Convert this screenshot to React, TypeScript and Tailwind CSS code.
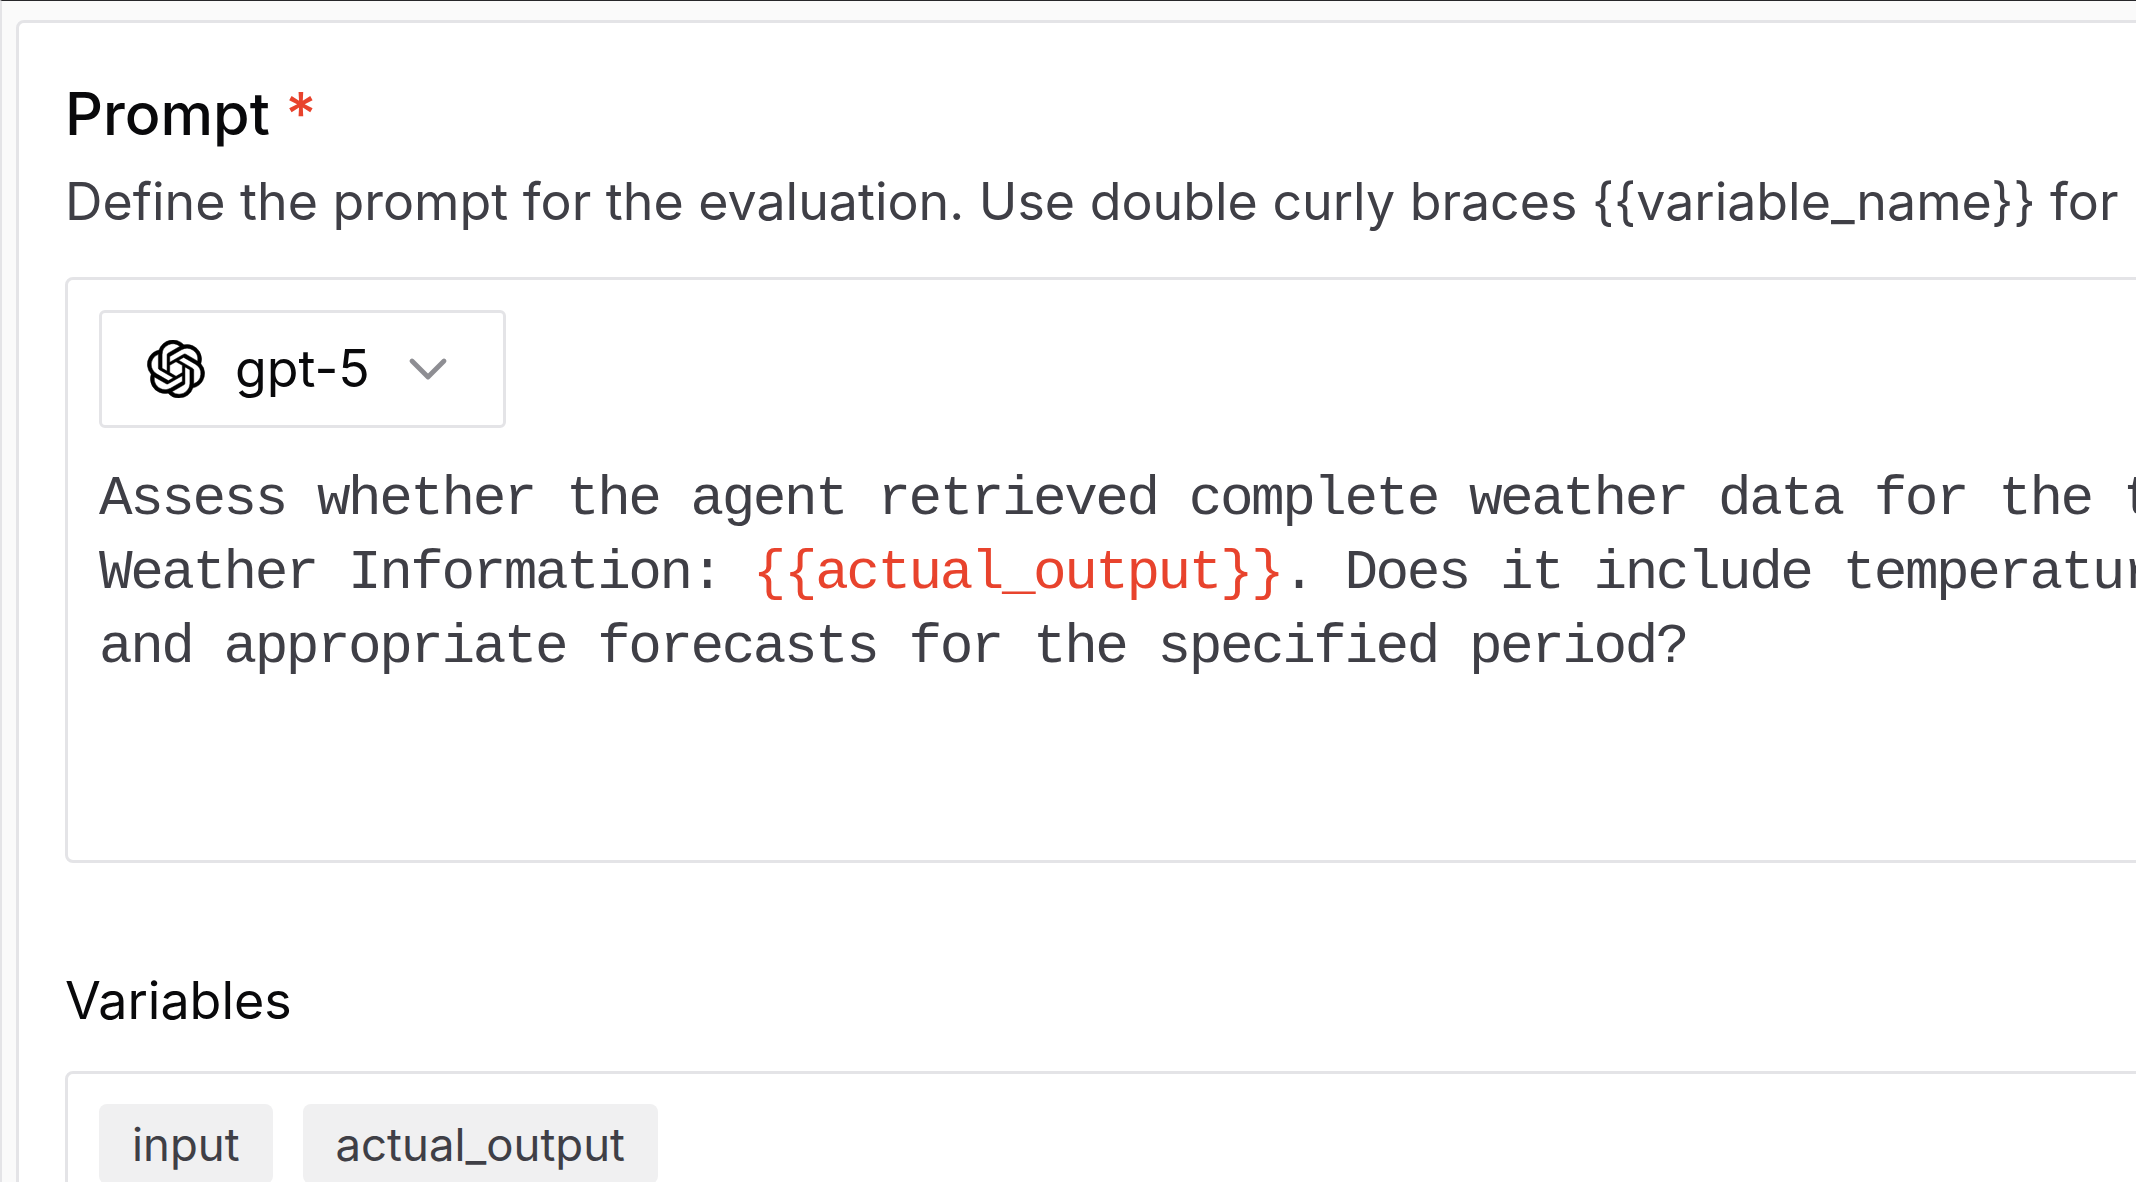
import React from 'react'
import { SiOpenai } from 'react-icons/si'
import { ChevronDown } from 'lucide-react'

const App: React.FC = () => {
  return (
    <div className="h-[1182px] w-[2136px] overflow-hidden border-t border-l-2 border-t-[#27272a] border-l-[#e4e4e7] bg-[#fafafa] pl-[14px] pt-[19px] font-['Inter',sans-serif]">
      <div className="w-[2400px] rounded-[8px] border-[3px] border-[#e4e4e7] bg-white px-[46px] pt-[53px] pb-[40px]">
        <h2 className="text-[59.2px] leading-[76px] font-medium text-[#09090b]">
          Prompt <span className="text-[#e8432d]">*</span>
        </h2>
        <p className="mt-[14px] whitespace-nowrap text-[51.9px] leading-[72px] text-[#3f3f46]">
          {'Define the prompt for the evaluation. Use double curly braces {{variable_name}} for'}
        </p>
        <div className="mt-[39px] h-[586px] rounded-[8px] border-[3px] border-[#e4e4e7] px-[31px] pt-[30px]">
          <div className="flex h-[118px] w-[407px] items-center rounded-[6px] border-[3px] border-[#e4e4e7] pl-[45px]">
            <SiOpenai className="h-[58px] w-[58px] stroke-[0.2] text-black" />
            <span className="ml-[30px] text-[51.8px] text-[#09090b]">gpt-5</span>
            <ChevronDown className="ml-[26px] h-[64px] w-[64px] text-[#8e8e93]" strokeWidth={1.8} />
          </div>
          <div className="mt-[34px] whitespace-nowrap font-['Liberation_Mono',monospace] text-[56px] leading-[74px] tracking-[-2.47px] text-[#3f3f46]">
            <div>Assess whether the agent retrieved complete weather data for the t</div>
            <div>
              Weather Information: <span className="text-[#e8432d]">{'{{actual_output}}'}</span>. Does it include temperature
            </div>
            <div>and appropriate forecasts for the specified period?</div>
          </div>
        </div>
        <h3 className="mt-[103px] text-[52px] leading-[70px] text-[#09090b]">Variables</h3>
        <div className="mt-[35px] rounded-[8px] border-[3px] border-[#e4e4e7] px-[31px] pt-[30px] pb-[30px]">
          <div className="flex gap-[30px]">
            <span className="rounded-[8px] bg-[#f0f0f1] px-[33px] pt-[9px] pb-[7px] text-[45.5px] leading-[64px] text-[#3f3f46]">input</span>
            <span className="rounded-[8px] bg-[#f0f0f1] px-[33px] pt-[9px] pb-[7px] text-[45.5px] leading-[64px] text-[#3f3f46]">actual_output</span>
          </div>
        </div>
      </div>
    </div>
  )
}

export default App
